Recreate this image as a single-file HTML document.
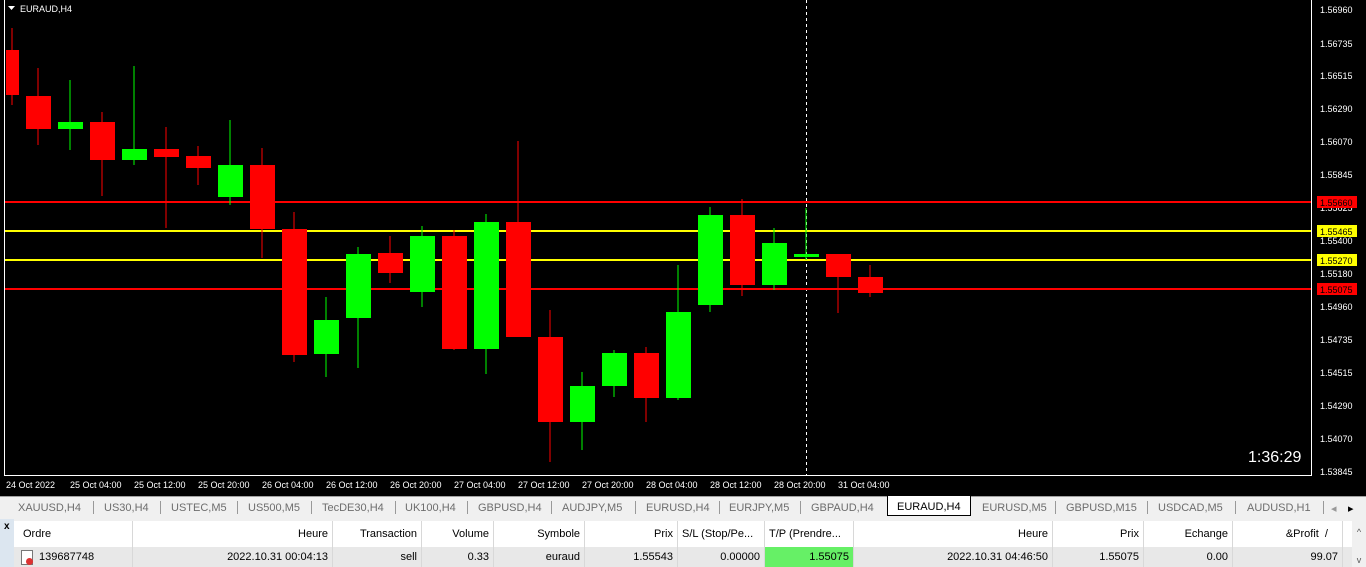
<!DOCTYPE html><html><head><style>
body{margin:0;width:1366px;height:567px;overflow:hidden;background:#f0f0f0;font-family:"Liberation Sans",sans-serif;position:relative}
.tabs{position:absolute;top:496px;left:0;width:1366px;height:22px;background:#f0f0f0;border-top:1px solid #a0a0a0;font-size:11px;color:#6d6d6d}
.tabs span{position:absolute;top:5px}
.tabs i{position:absolute;top:4px;width:1px;height:13px;background:#999}
.tabs .act{top:-1px;height:20px;background:#fff;border:1px solid #000;border-top:none;color:#000;padding:5px 9px 0;box-sizing:border-box}
.r{position:absolute;white-space:nowrap;font-size:11px;color:#000}
.h div,.d div{position:absolute;top:0;height:100%;box-sizing:border-box;border-right:1px solid #d8d8d8;padding:0 4px;text-align:right}
</style></head><body>
<svg width="1366" height="496" style="position:absolute;left:0;top:0" font-family="Liberation Sans" font-size="9">
<rect width="1366" height="496" fill="#000"/>
<line x1="1311.5" y1="0" x2="1311.5" y2="476" stroke="#fff"/>
<line x1="4" y1="475.5" x2="1312" y2="475.5" stroke="#fff"/>
<line x1="4.5" y1="0" x2="4.5" y2="476" stroke="#fff"/>
<line x1="806.5" y1="0" x2="806.5" y2="475" stroke="#fff" stroke-dasharray="3,3"/>
<line x1="5" y1="202" x2="1311" y2="202" stroke="#f00" stroke-width="2"/>
<line x1="5" y1="231" x2="1311" y2="231" stroke="#ff0" stroke-width="2"/>
<line x1="5" y1="260" x2="1311" y2="260" stroke="#ff0" stroke-width="2"/>
<line x1="5" y1="289" x2="1311" y2="289" stroke="#f00" stroke-width="2"/>
<g id="c"></g>
<path d="M8 6h7l-3.5 4z" fill="#fff"/>
<text x="20" y="12" fill="#fff" font-size="9">EURAUD,H4</text>
<text x="1248" y="462" fill="#fff" font-size="16">1:36:29</text>
<g fill="#fff">
<text x="1320" y="13">1.56960</text><text x="1320" y="47">1.56735</text><text x="1320" y="79">1.56515</text><text x="1320" y="112">1.56290</text><text x="1320" y="145">1.56070</text><text x="1320" y="178">1.55845</text><text x="1320" y="211">1.55625</text><text x="1320" y="244">1.55400</text><text x="1320" y="277">1.55180</text><text x="1320" y="310">1.54960</text><text x="1320" y="343">1.54735</text><text x="1320" y="376">1.54515</text><text x="1320" y="409">1.54290</text><text x="1320" y="442">1.54070</text><text x="1320" y="475">1.53845</text>
</g>
<rect x="1317" y="196" width="40" height="12" fill="#f00"/><text x="1320" y="206" fill="#000">1.55660</text>
<rect x="1317" y="225" width="40" height="12" fill="#ff0"/><text x="1320" y="235" fill="#000">1.55465</text>
<rect x="1317" y="254" width="40" height="12" fill="#ff0"/><text x="1320" y="264" fill="#000">1.55270</text>
<rect x="1317" y="283" width="40" height="12" fill="#f00"/><text x="1320" y="293" fill="#000">1.55075</text>
<g fill="#fff">
<text x="6" y="488">24 Oct 2022</text><text x="70" y="488">25 Oct 04:00</text><text x="134" y="488">25 Oct 12:00</text><text x="198" y="488">25 Oct 20:00</text><text x="262" y="488">26 Oct 04:00</text><text x="326" y="488">26 Oct 12:00</text><text x="390" y="488">26 Oct 20:00</text><text x="454" y="488">27 Oct 04:00</text><text x="518" y="488">27 Oct 12:00</text><text x="582" y="488">27 Oct 20:00</text><text x="646" y="488">28 Oct 04:00</text><text x="710" y="488">28 Oct 12:00</text><text x="774" y="488">28 Oct 20:00</text><text x="838" y="488">31 Oct 04:00</text>
</g>
</svg>
<script>
var d=[[12,50,95,28,105,0],[38,96,129,68,145,0],[70,122,129,80,150,1],[102,122,160,112,196,0],[134,149,160,66,165,1],[166,149,157,127,228,0],[198,156,168,146,185,0],[230,165,197,120,205,1],[262,165,229,148,258,0],[294,229,355,212,362,0],[326,320,354,297,377,1],[358,254,318,247,368,1],[390,253,273,236,283,0],[422,236,292,226,307,1],[454,236,349,230,350,0],[486,222,349,214,374,1],[518,222,337,141,337,0],[550,337,422,310,462,0],[582,386,422,372,450,1],[614,353,386,350,397,1],[646,353,398,347,422,0],[678,312,398,265,400,1],[710,215,305,207,312,1],[742,215,285,199,296,0],[774,243,285,228,290,1],[806,254,257,208,260,1],[838,254,277,254,313,0],[870,277,293,265,297,0]];
var s='';d.forEach(function(c){var col=c[5]?'#0f0':'#f00';var x0=c[0]===12?6:c[0]-12;var w=c[0]===12?13:25;s+='<rect x="'+(c[0]-0.5)+'" y="'+c[3]+'" width="1" height="'+(c[4]-c[3])+'" fill="'+col+'"/><rect x="'+x0+'" y="'+c[1]+'" width="'+w+'" height="'+Math.max(3,c[2]-c[1])+'" fill="'+col+'"/>';});
document.getElementById('c').innerHTML=s;
</script>
<div class="tabs">
<span style="left:18px">XAUUSD,H4</span><i style="left:93px"></i><span style="left:104px">US30,H4</span><i style="left:160px"></i><span style="left:171px">USTEC,M5</span><i style="left:237px"></i><span style="left:248px">US500,M5</span><i style="left:311px"></i><span style="left:322px">TecDE30,H4</span><i style="left:395px"></i><span style="left:405px">UK100,H4</span><i style="left:467px"></i><span style="left:478px">GBPUSD,H4</span><i style="left:551px"></i><span style="left:562px">AUDJPY,M5</span><i style="left:635px"></i><span style="left:646px">EURUSD,H4</span><i style="left:719px"></i><span style="left:729px">EURJPY,M5</span><i style="left:800px"></i><span style="left:811px">GBPAUD,H4</span><span class="act" style="left:887px">EURAUD,H4</span><span style="left:982px">EURUSD,M5</span><i style="left:1055px"></i><span style="left:1066px">GBPUSD,M15</span><i style="left:1147px"></i><span style="left:1158px">USDCAD,M5</span><i style="left:1235px"></i><span style="left:1247px">AUDUSD,H1</span><i style="left:1323px"></i><span style="left:1331px;color:#999">◂</span><span style="left:1348px;color:#000">▸</span>
</div>
<div style="position:absolute;left:0;top:519px;width:14px;height:48px;background:#dce6f0"><b style="position:absolute;left:4px;top:2px;font-size:10px">x</b></div>
<div class="r h" style="top:521px;left:14px;width:1338px;height:26px;line-height:26px;background:#fff">
<div style="left:0;width:119px;text-align:left;padding-left:9px">Ordre</div><div style="left:119px;width:200px">Heure</div><div style="left:319px;width:89px">Transaction</div><div style="left:408px;width:72px">Volume</div><div style="left:480px;width:91px">Symbole</div><div style="left:571px;width:93px">Prix</div><div style="left:664px;width:87px;text-align:left">S/L (Stop/Pe...</div><div style="left:751px;width:89px;text-align:left">T/P (Prendre...</div><div style="left:840px;width:199px">Heure</div><div style="left:1039px;width:91px">Prix</div><div style="left:1130px;width:89px">Echange</div><div style="left:1219px;width:110px;padding-right:14px">&amp;Profit &nbsp;/</div>
</div>
<div class="r d" style="top:547px;left:14px;width:1338px;height:20px;line-height:20px;background:#e8e8e8">
<div style="left:0;width:119px;text-align:left;padding-left:25px">139687748</div><div style="left:119px;width:200px">2022.10.31 00:04:13</div><div style="left:319px;width:89px">sell</div><div style="left:408px;width:72px">0.33</div><div style="left:480px;width:91px">euraud</div><div style="left:571px;width:93px">1.55543</div><div style="left:664px;width:87px">0.00000</div><div style="left:751px;width:89px;background:#66f066">1.55075</div><div style="left:840px;width:199px">2022.10.31 04:46:50</div><div style="left:1039px;width:91px">1.55075</div><div style="left:1130px;width:89px">0.00</div><div style="left:1219px;width:110px">99.07</div>
</div>
<div style="position:absolute;left:1352px;top:521px;width:14px;height:46px;background:#f0f0f0;font-size:9px;color:#555;text-align:center"><div style="margin-top:6px">^</div><div style="margin-top:18px">v</div></div>
<div style="position:absolute;left:21px;top:550px;width:10px;height:13px;border:1px solid #777;background:#fff"></div>
<div style="position:absolute;left:26px;top:558px;width:7px;height:7px;border-radius:50%;background:#d33"></div>
</body></html>
